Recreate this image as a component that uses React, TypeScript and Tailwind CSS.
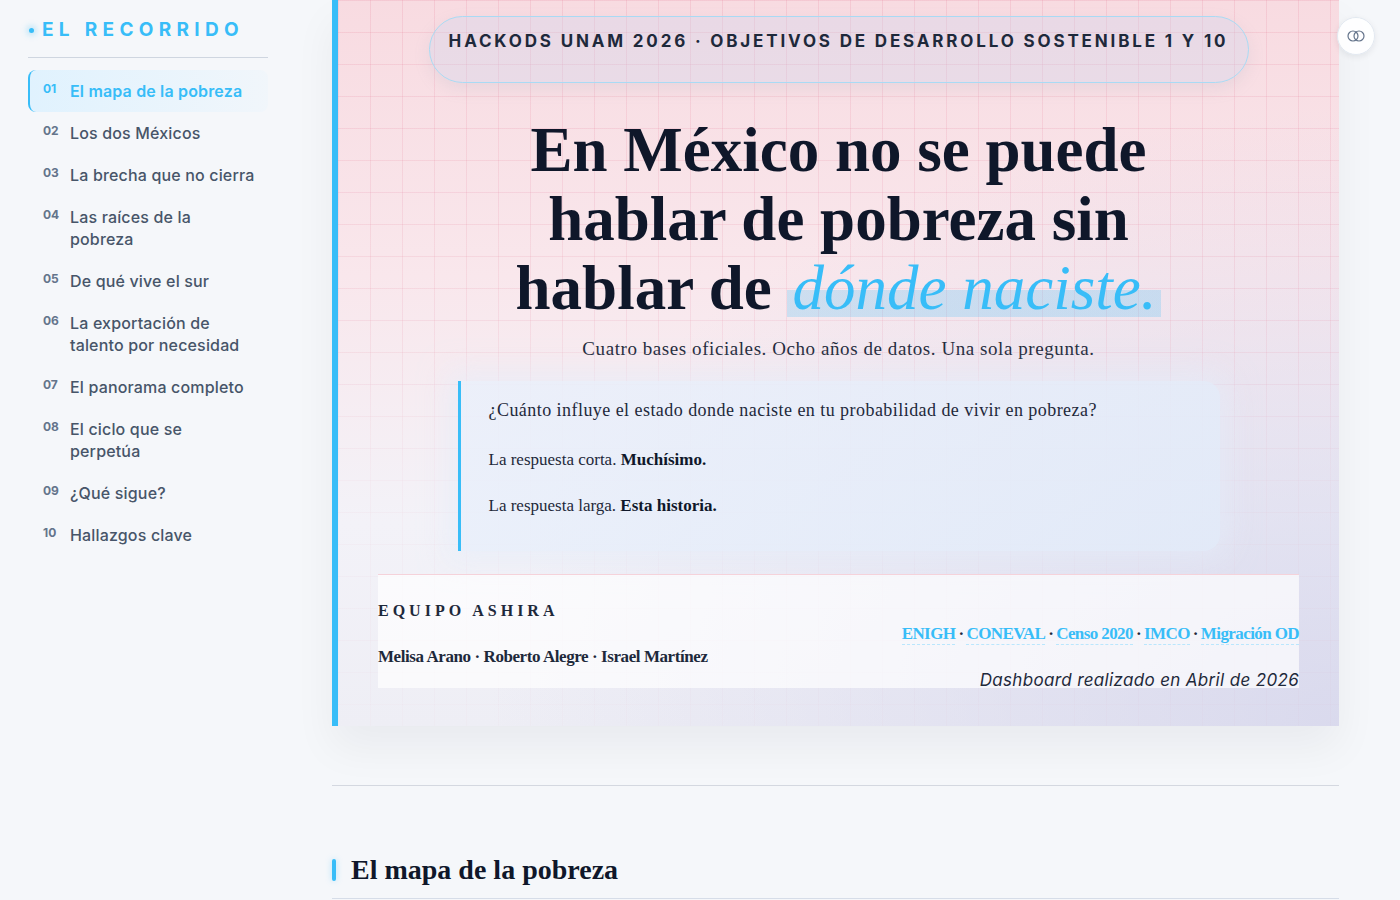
import { Fragment } from 'react';

const chapters = [
  { n: '01', t: ['El mapa de la pobreza'] },
  { n: '02', t: ['Los dos Méxicos'] },
  { n: '03', t: ['La brecha que no cierra'] },
  { n: '04', t: ['Las raíces de la', 'pobreza'] },
  { n: '05', t: ['De qué vive el sur'] },
  { n: '06', t: ['La exportación de', 'talento por necesidad'] },
  { n: '07', t: ['El panorama completo'] },
  { n: '08', t: ['El ciclo que se', 'perpetúa'] },
  { n: '09', t: ['¿Qué sigue?'] },
  { n: '10', t: ['Hallazgos clave'] },
];

const sources = ['ENIGH', 'CONEVAL', 'Censo 2020', 'IMCO', 'Migración OD'];

function OverlapIcon() {
  return (
    <svg width="18" height="12" viewBox="0 0 18 12" fill="none" stroke="#64748b" strokeWidth="1.2">
      <circle cx="6" cy="6" r="5" />
      <circle cx="12" cy="6" r="5" />
    </svg>
  );
}

export default function App() {
  return (
    <div className="min-h-screen flex bg-[#f5f7fa] text-[#1e293b] [font-family:Inter,sans-serif]">
      {/* Sidebar */}
      <aside className="w-[332px] shrink-0 pl-[28px] pr-[64px] pt-[18px]">
        <div className="flex items-center gap-[8px] h-[24px]">
          <span className="ml-[1px] w-[5px] h-[5px] rounded-full bg-[#38bdf8] shadow-[0_0_6px_2px_rgba(56,189,248,0.35)]" />
          <span className="text-[19px] font-bold tracking-[0.28em] text-[#38bdf8]">EL RECORRIDO</span>
        </div>
        <div className="mt-[15px] h-px bg-[#cfd6e0]" />
        <nav className="mt-[12px]">
          {chapters.map((c, i) => {
            const active = i === 0;
            return (
              <div
                key={c.n}
                className={
                  active
                    ? 'flex items-start gap-[8px] pl-[13px] pr-[10px] py-[10px] rounded-lg border-l-2 border-[#38bdf8] bg-[linear-gradient(to_right,#e0f2fe,rgba(224,242,254,0.2))]'
                    : 'flex items-start gap-[8px] pl-[15px] pr-[10px] py-[10px]'
                }
              >
                <span
                  className={`w-[19px] shrink-0 pt-[1px] text-[12px] leading-[16px] font-bold ${
                    active ? 'text-[#38bdf8]' : 'text-[#64748b]'
                  }`}
                >
                  {c.n}
                </span>
                <span
                  className={`text-[16px] leading-[22px] tracking-[0.01em] ${
                    active ? 'text-[#38bdf8] font-semibold' : 'text-[#475569] font-medium'
                  }`}
                >
                  {c.t.map((line, j) => (
                    <Fragment key={j}>
                      {j > 0 && <br />}
                      {line}
                    </Fragment>
                  ))}
                </span>
              </div>
            );
          })}
        </nav>
      </aside>

      {/* Main */}
      <main className="flex-1 min-w-0 pr-[61px]">
        <section className="relative border-l-[6px] border-[#38bdf8] bg-[radial-gradient(ellipse_at_bottom_right,rgba(214,214,236,0.85),transparent_60%),linear-gradient(180deg,#f8dbe1_0%,#f9e7ec_38%,#f3f2f8_72%,#eeeef5_100%)] shadow-[0_22px_40px_rgba(15,23,42,0.05)]">
          <div className="absolute inset-0 pointer-events-none bg-[linear-gradient(to_right,rgba(228,110,140,0.16)_1px,transparent_1px),linear-gradient(to_bottom,rgba(228,110,140,0.16)_1px,transparent_1px)] bg-[size:32px_32px] [mask-image:linear-gradient(to_bottom,black_0%,rgba(0,0,0,0.75)_45%,rgba(0,0,0,0.25)_65%,rgba(0,0,0,0.15)_100%)]" />
          <div className="relative flex flex-col items-center pt-[16px] pb-[38px] px-[40px]">
            <div className="w-[820px] h-[67px] rounded-full border border-[#a9daf4] bg-[rgba(200,212,238,0.3)] shadow-[0_6px_16px_rgba(148,163,184,0.15)] flex items-start justify-center pt-[13px]">
              <span className="text-[17px] leading-[22px] font-bold tracking-[0.167em] text-[#1e293b]">
                HACKODS UNAM 2026 · OBJETIVOS DE DESARROLLO SOSTENIBLE 1 Y 10
              </span>
            </div>

            <h1 className="mt-[33px] text-center text-[63px] leading-[69px] font-bold text-[#0f172a] [font-family:'Liberation_Serif',serif]">
              En México no se puede
              <br />
              hablar de pobreza sin
              <br />
              hablar de{' '}
              <span className="px-[5px] italic font-normal text-[#38bdf8] bg-[linear-gradient(to_bottom,transparent_53%,rgba(56,189,248,0.22)_53%,rgba(56,189,248,0.22)_91%,transparent_91%)]">
                dónde naciste.
              </span>
            </h1>

            <p className="mt-[13px] text-[19px] leading-[25px] tracking-[0.03em] text-[#1e293b] [font-family:'Liberation_Serif',serif]">
              Cuatro bases oficiales. Ocho años de datos. Una sola pregunta.
            </p>

            <div className="mt-[20px] w-[762px] rounded-r-[16px] border-l-[3px] border-[#38bdf8] bg-[linear-gradient(135deg,rgba(234,240,251,0.85),rgba(226,235,249,0.85))] shadow-[0_0_28px_10px_rgba(228,236,250,0.55)] pl-[28px] pt-[16px] pb-[32px] text-[17px] leading-[26px] text-[#1e293b] [font-family:'Liberation_Serif',serif]">
              <p className="text-[18px] tracking-[0.025em]">
                ¿Cuánto influye el estado donde naciste en tu probabilidad de vivir en pobreza?
              </p>
              <p className="mt-[24px]">
                La respuesta corta. <strong className="font-bold text-[#0f172a]">Muchísimo.</strong>
              </p>
              <p className="mt-[20px]">
                La respuesta larga. <strong className="font-bold text-[#0f172a]">Esta historia.</strong>
              </p>
            </div>

            <div className="mt-[23px] self-stretch h-[114px] border-t border-[#f5d2da] bg-[rgba(255,255,255,0.68)] flex justify-between">
              <div className="pt-[24px] [font-family:'Liberation_Serif',serif]">
                <div className="text-[16px] leading-[24px] font-bold tracking-[0.25em] text-[#1e293b]">EQUIPO ASHIRA</div>
                <div className="mt-[21px] text-[17px] leading-[26px] font-bold tracking-[-0.025em] text-[#1e293b]">
                  Melisa Arano · Roberto Alegre · Israel Martínez
                </div>
              </div>
              <div className="pt-[46px] flex flex-col items-end">
                <div className="flex items-center text-[17px] leading-[26px] font-bold tracking-[-0.035em] [font-family:'Liberation_Serif',serif]">
                  {sources.map((s, i) => (
                    <Fragment key={s}>
                      {i > 0 && <span className="mx-[3px] text-[#1e293b]">·</span>}
                      <span className="text-[#38bdf8] border-b border-dashed border-[#bae6fd] leading-[20px]">{s}</span>
                    </Fragment>
                  ))}
                </div>
                <div className="mt-[20px] text-[17px] leading-[26px] italic text-[#1e293b] tracking-[0.02em]">
                  Dashboard realizado en Abril de 2026
                </div>
              </div>
            </div>
          </div>
        </section>

        <div className="mt-[59px] h-px bg-[#d4d8e0]" />

        <div className="mt-[66px] pb-[10px] border-b border-[#d6dde8] flex items-center gap-[15px]">
          <span className="w-[4px] h-[22px] rounded-full bg-[#38bdf8] shadow-[0_0_6px_rgba(56,189,248,0.35)]" />
          <h2 className="text-[28px] leading-[36px] font-bold text-[#0f172a] [font-family:'Liberation_Serif',serif]">
            El mapa de la pobreza
          </h2>
        </div>
        <div className="h-[200px]" />
      </main>

      <button className="fixed top-[17px] right-[25px] w-[38px] h-[38px] rounded-full bg-white/90 border border-[#e2e8f0] shadow-[0_2px_6px_rgba(15,23,42,0.08)] flex items-center justify-center">
        <OverlapIcon />
      </button>
    </div>
  );
}
